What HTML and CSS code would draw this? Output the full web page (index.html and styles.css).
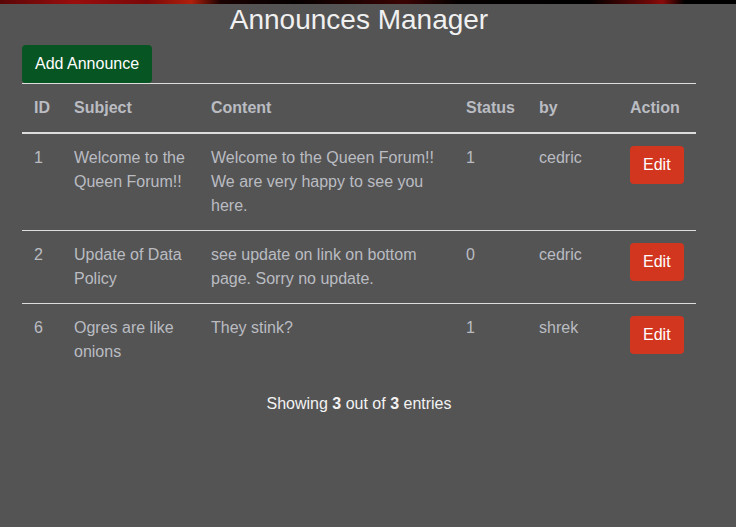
FILE: index.html
```html
<!DOCTYPE html>
<html>
<head>
<meta charset="utf-8">
<link rel="stylesheet" href="styles.css">
</head>
<body>
<div class="topband"></div>
<div class="page">
  <h1 class="title">Announces Manager</h1>
  <button class="btn btn-add">Add Announce</button>
  <table class="grid">
    <colgroup>
      <col class="c-id"><col class="c-subj"><col class="c-content"><col class="c-status"><col class="c-by"><col class="c-action">
    </colgroup>
    <thead>
      <tr><th>ID</th><th>Subject</th><th>Content</th><th>Status</th><th>by</th><th>Action</th></tr>
    </thead>
    <tbody>
      <tr><td>1</td><td>Welcome to the Queen Forum!!</td><td>Welcome to the Queen Forum!! We are very happy to see you here.</td><td>1</td><td>cedric</td><td><button class="btn btn-edit">Edit</button></td></tr>
      <tr><td>2</td><td>Update of Data Policy</td><td>see update on link on bottom page. Sorry no update.</td><td>0</td><td>cedric</td><td><button class="btn btn-edit">Edit</button></td></tr>
      <tr><td>6</td><td>Ogres are like onions</td><td>They stink?</td><td>1</td><td>shrek</td><td><button class="btn btn-edit">Edit</button></td></tr>
    </tbody>
  </table>
  <div class="summary">Showing <b>3</b> out of <b>3</b> entries</div>
</div>
</body>
</html>
```
FILE: styles.css
```css
html, body {
  margin: 0;
  padding: 0;
  background: #545454;
  font-family: "Liberation Sans", Arial, sans-serif;
  font-size: 16px;
}
.topband {
  height: 4px;
  background: linear-gradient(90deg, #5a0606 0%, #9a0d0d 10%, #7a0808 20%, #b0200c 26%, #1a0202 30%, #050000 40%, #3a0303 55%, #050000 62%, #000 80%, #6a0606 88%, #8a0a0a 90%, #000 93%, #000 100%);
}
.page {
  width: 674px;
  margin-left: 22px;
}
.title {
  margin: 0;
  font-size: 28px;
  line-height: 32px;
  font-weight: normal;
  text-align: center;
  color: #f0f0f0;
}
.btn {
  font-family: "Liberation Sans", Arial, sans-serif;
  font-size: 16px;
  line-height: 24px;
  border: none;
  border-radius: 4px;
  color: #fff;
  padding: 7px 13px;
  cursor: pointer;
}
.btn-add {
  display: block;
  margin-top: 9px;
  background: #075522;
}
.btn-edit {
  background: #d2361f;
}
.grid {
  width: 674px;
  border-collapse: collapse;
  table-layout: fixed;
  color: #babcc2;
}
.c-id { width: 40px; }
.c-subj { width: 137px; }
.c-content { width: 255px; }
.c-status { width: 73px; }
.c-by { width: 91px; }
.c-action { width: 78px; }
.grid th, .grid td {
  padding: 12px;
  line-height: 24px;
  text-align: left;
  vertical-align: top;
  border-top: 1px solid #dddddd;
}
.grid th {
  font-weight: bold;
  border-bottom: 2px solid #dddddd;
}
.summary {
  margin-top: 16px;
  text-align: center;
  line-height: 24px;
  color: #f2f2f2;
}
```
